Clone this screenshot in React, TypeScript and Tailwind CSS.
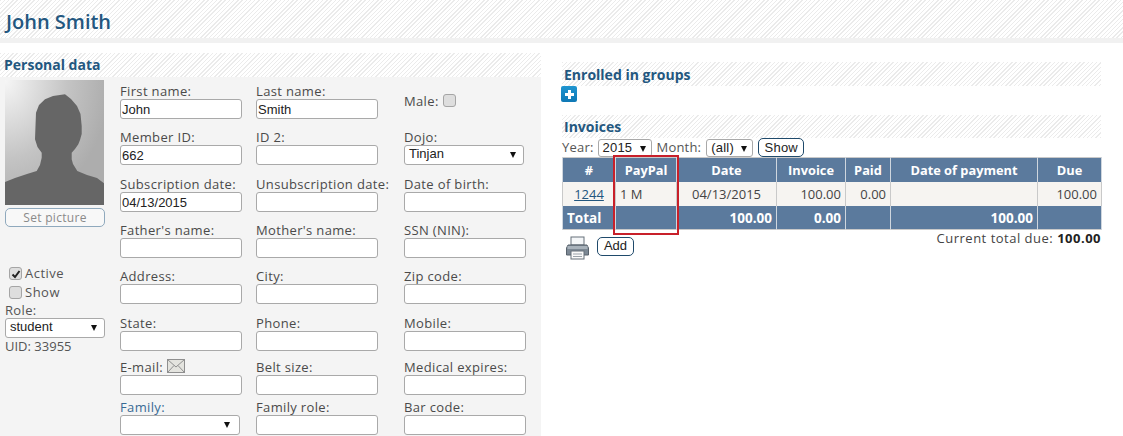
import React from "react";

const FONT = "font-['Open_Sans','Noto_Sans',sans-serif]";
const HATCH =
  "bg-[repeating-linear-gradient(135deg,#ebebeb_0px,#ebebeb_1px,#ffffff_1px,#ffffff_3px)]";
const FIELD =
  "block h-[20px] w-[122px] rounded-[3px] border border-[#a9a9a9] bg-white px-[1px] font-['Liberation_Sans',sans-serif] text-[13px] leading-[18px] text-[#222] outline-none";

function Triangle({ className }: { className: string }) {
  return (
    <svg width="6" height="6" viewBox="0 0 6 6" className={className}>
      <path d="M0 0H6L3 6Z" fill="#111" />
    </svg>
  );
}

function Select({
  value,
  width,
  height = "h-[20px]",
  arrow = "right-[7px]",
}: {
  value: string;
  width: string;
  height?: string;
  arrow?: string;
}) {
  return (
    <div
      className={`relative ${height} ${width} rounded-[3px] border border-[#a9a9a9] bg-white pl-[4px] font-['Liberation_Sans',sans-serif] text-[13px] leading-[16px] text-[#222]`}
    >
      {value}
      <Triangle className={`absolute top-[6px] ${arrow}`} />
    </div>
  );
}

function Field({
  label,
  value = "",
  icon,
}: {
  label: string;
  value?: string;
  icon?: React.ReactNode;
}) {
  return (
    <div className="flex flex-col">
      <div className="flex h-[15px] items-center gap-[4px] whitespace-nowrap text-[13px] leading-[15px] tracking-[0.35px] text-[#4a4a4a]">
        {label}
        {icon}
      </div>
      <input className={FIELD} defaultValue={value} readOnly />
    </div>
  );
}

function Check({ checked, label }: { checked?: boolean; label: string }) {
  return (
    <div className="flex h-[19px] items-center gap-[3px] text-[13px] tracking-[0.5px] text-[#555]">
      <span className="flex h-[13px] w-[13px] items-center justify-center rounded-[3px] border border-[#a5a5a5] bg-[#dedede]">
        {checked && (
          <svg width="10" height="10" viewBox="0 0 10 10">
            <path d="M1.5 5.5L4 8L8.5 2" fill="none" stroke="#222" strokeWidth="2" />
          </svg>
        )}
      </span>
      {label}
    </div>
  );
}

function SectionTitle({ children, className }: { children: React.ReactNode; className: string }) {
  return (
    <div className={`${HATCH} ${className} flex items-center text-[14px] font-bold text-[#23577f]`}>
      {children}
    </div>
  );
}

const TH = "border-x border-[#cfd6de] px-[4px] pt-[2px] font-bold text-white text-[12.8px] text-center";
const TD = "border-x border-[#c9c9c9] px-[4px] pt-[2px] text-[13px] text-[#444]";
const TF = "border-x border-[#cfd6de] px-[4px] pt-[2px] font-bold text-white text-[13.5px] text-right";

export default function App() {
  return (
    <div className={`${FONT} h-[436px] w-[1123px] overflow-hidden bg-white`}>
      <div className={`${HATCH} flex h-[38px] items-center pl-[6px] pt-[5px] text-[20px] font-semibold text-[#23577f]`}>
        John Smith
      </div>
      <div className="h-[5px] bg-[#f1f1f1]" />

      <div className="mt-[10px] flex items-start">
        {/* Personal data */}
        <div className="h-[383px] w-[541px] shrink-0 bg-[#f4f4f4]">
          <SectionTitle className="h-[24px] pb-[2px] pl-[4px]">Personal data</SectionTitle>
          <div className="flex">
            <div className="ml-[5px] w-[100px] shrink-0 pt-[3px]">
              <svg width="99" height="125" viewBox="0 0 99 125" className="block">
                <defs>
                  <radialGradient id="av" cx="0" cy="0" r="1.05">
                    <stop offset="0" stopColor="#f6f6f6" />
                    <stop offset="0.6" stopColor="#c4c4c4" />
                    <stop offset="1" stopColor="#adadad" />
                  </radialGradient>
                </defs>
                <rect width="99" height="125" fill="url(#av)" />
                <path
                  d="M60 14.3L66 19L72 26L75.5 34L76.7 46L76.7 54L75 60L73.3 64.3L70 69L66.7 72.7L66.7 79.3L68 84L72.3 91L82 95L92 98L99 103.3V125H0V102L10 98L22 94L31.7 91L35 85L36.7 77.7V72.7L32.5 67L30 59.3L30.5 46L31 32.7L34 25L40 19.3L48 16Z"
                  fill="#666666"
                />
              </svg>
              <div className="mt-[3px] flex h-[19px] w-[100px] items-center justify-center rounded-[5px] border border-[#8fa9bd] bg-[#f8f8f8] text-[12px] tracking-[0.3px] text-[#8a8a8a]">
                Set picture
              </div>
              <div className="ml-[4px] mt-[37px]">
                <Check checked label="Active" />
                <Check label="Show" />
              </div>
              <div className="h-[16px] text-[13px] leading-[16px] tracking-[0.35px] text-[#555]">Role:</div>
              <Select value="student" width="w-[100px]" />
              <div className="text-[13px] leading-[16px] text-[#555]">UID: 33955</div>
            </div>

            <div className="ml-[15px] mt-[7px] grid grid-cols-[136px_148px_122px] grid-rows-[46px_47px_46px_46px_47px_44px_40px_35px]">
              <Field label="First name:" value="John" />
              <Field label="Last name:" value="Smith" />
              <div className="flex h-[35px] items-center gap-[4px] text-[13px] tracking-[0.35px] text-[#4a4a4a]">
                Male:
                <span className="mb-[3px] h-[13px] w-[13px] rounded-[3px] border border-[#a5a5a5] bg-[#dedede]" />
              </div>

              <Field label="Member ID:" value="662" />
              <Field label="ID 2:" />
              <div className="flex flex-col">
                <div className="h-[15px] text-[13px] leading-[15px] tracking-[0.35px] text-[#4a4a4a]">Dojo:</div>
                <Select value="Tinjan" width="w-[120px]" />
              </div>

              <Field label="Subscription date:" value="04/13/2015" />
              <Field label="Unsubscription date:" />
              <Field label="Date of birth:" />

              <Field label="Father's name:" />
              <Field label="Mother's name:" />
              <Field label="SSN (NIN):" />

              <Field label="Address:" />
              <Field label="City:" />
              <Field label="Zip code:" />

              <Field label="State:" />
              <Field label="Phone:" />
              <Field label="Mobile:" />

              <Field
                label="E-mail:"
                icon={
                  <svg width="18" height="14" viewBox="0 0 18 14" className="mb-[4px] shrink-0">
                    <rect x="0.5" y="0.5" width="17" height="13" fill="#e4e4df" stroke="#8f8f8f" />
                    <path d="M0.5 0.5L9 8L17.5 0.5M0.5 13.5L7 6.5M17.5 13.5L11 6.5" fill="none" stroke="#8f8f8f" />
                  </svg>
                }
              />
              <Field label="Belt size:" />
              <Field label="Medical expires:" />

              <div className="flex flex-col">
                <div className="h-[15px] text-[13px] leading-[15px] tracking-[0.35px] text-[#386a94]">Family:</div>
                <Select value="" width="w-[120px]" arrow="right-[9px]" />
              </div>
              <Field label="Family role:" />
              <Field label="Bar code:" />
            </div>
          </div>
        </div>

        {/* Right column */}
        <div className="ml-[21px] w-[539px] pt-[9px]">
          <SectionTitle className="h-[24px] pl-[2px]">Enrolled in groups</SectionTitle>
          <div className="-ml-[1px] flex h-[16px] w-[16px] items-center justify-center rounded-[2px] bg-gradient-to-b from-[#1f95d0] to-[#0f78b5]">
            <svg width="11" height="11" viewBox="0 0 11 11">
              <path d="M5.5 1V10M1 5.5H10" stroke="#fff" strokeWidth="3" />
            </svg>
          </div>

          <SectionTitle className="mt-[13px] h-[23px] pl-[2px]">Invoices</SectionTitle>
          <div className="flex h-[19px] items-center gap-[4px] text-[13px] tracking-[0.2px] text-[#555]">
            <span>Year:</span>
            <Select value="2015" width="w-[54px]" height="h-[18px]" arrow="right-[5px]" />
            <span className="ml-[1px] mr-[1px]">Month:</span>
            <Select value="(all)" width="w-[47px]" height="h-[18px]" arrow="right-[5px]" />
            <div className="ml-[1px] flex h-[19px] w-[46px] items-center justify-center rounded-[5px] border border-[#1f4a6b] bg-white font-['Liberation_Sans',sans-serif] text-[13px] text-[#222]">
              Show
            </div>
          </div>

          <div className="relative">
            <table className="w-[539px] table-fixed border-collapse border-y border-[#c9c9c9]">
              <colgroup>
                <col className="w-[53px]" />
                <col className="w-[61px]" />
                <col className="w-[100px]" />
                <col className="w-[69px]" />
                <col className="w-[45px]" />
                <col className="w-[147px]" />
                <col className="w-[64px]" />
              </colgroup>
              <tbody>
                <tr className="h-[24px] bg-[#5b7a9d]">
                  <td className={TH}>#</td>
                  <td className={TH}>PayPal</td>
                  <td className={TH}>Date</td>
                  <td className={TH}>Invoice</td>
                  <td className={TH}>Paid</td>
                  <td className={TH}>Date of payment</td>
                  <td className={TH}>Due</td>
                </tr>
                <tr className="h-[24px] bg-[#f6f4f1]">
                  <td className={`${TD} text-center text-[#23577f] underline`}>1244</td>
                  <td className={TD}>1 M</td>
                  <td className={`${TD} text-center`}>04/13/2015</td>
                  <td className={`${TD} text-right`}>100.00</td>
                  <td className={`${TD} text-right`}>0.00</td>
                  <td className={TD}></td>
                  <td className={`${TD} text-right`}>100.00</td>
                </tr>
                <tr className="h-[24px] bg-[#5b7a9d]">
                  <td className={`${TF} !text-left`}>Total</td>
                  <td className={TF}></td>
                  <td className={TF}>100.00</td>
                  <td className={TF}>0.00</td>
                  <td className={TF}></td>
                  <td className={TF}>100.00</td>
                  <td className={TF}></td>
                </tr>
              </tbody>
            </table>
            <div className="absolute left-[51px] top-[-2px] h-[80px] w-[66px] border-2 border-[#c8202a]" />
          </div>

          <div className="flex items-start justify-between">
            <div className="flex items-center">
              <svg width="23" height="24" viewBox="0 0 23 24" className="ml-[4px] mt-[6px]">
                <rect x="5" y="1" width="13" height="8" fill="#f4f6f8" stroke="#66707a" />
                <path d="M2 9H21L22.5 12V19H0.5V12Z" fill="#7c8894" stroke="#59636d" />
                <rect x="1.5" y="10" width="20" height="3" fill="#a8b2bb" />
                <rect x="5" y="15" width="13" height="8" fill="#fafafa" stroke="#66707a" />
                <path d="M7 18H16M7 20.5H16" stroke="#9aa2aa" />
              </svg>
              <div className="ml-[8px] mt-[2px] flex h-[19px] w-[37px] items-center justify-center rounded-[5px] border border-[#1f4a6b] bg-white font-['Liberation_Sans',sans-serif] text-[13px] text-[#222]">
                Add
              </div>
            </div>
            <div className="text-[13px] leading-[16px] tracking-[0.5px] text-[#444]">
              Current total due: <b className="text-[#222]">100.00</b>
            </div>
          </div>
        </div>
      </div>
    </div>
  );
}
